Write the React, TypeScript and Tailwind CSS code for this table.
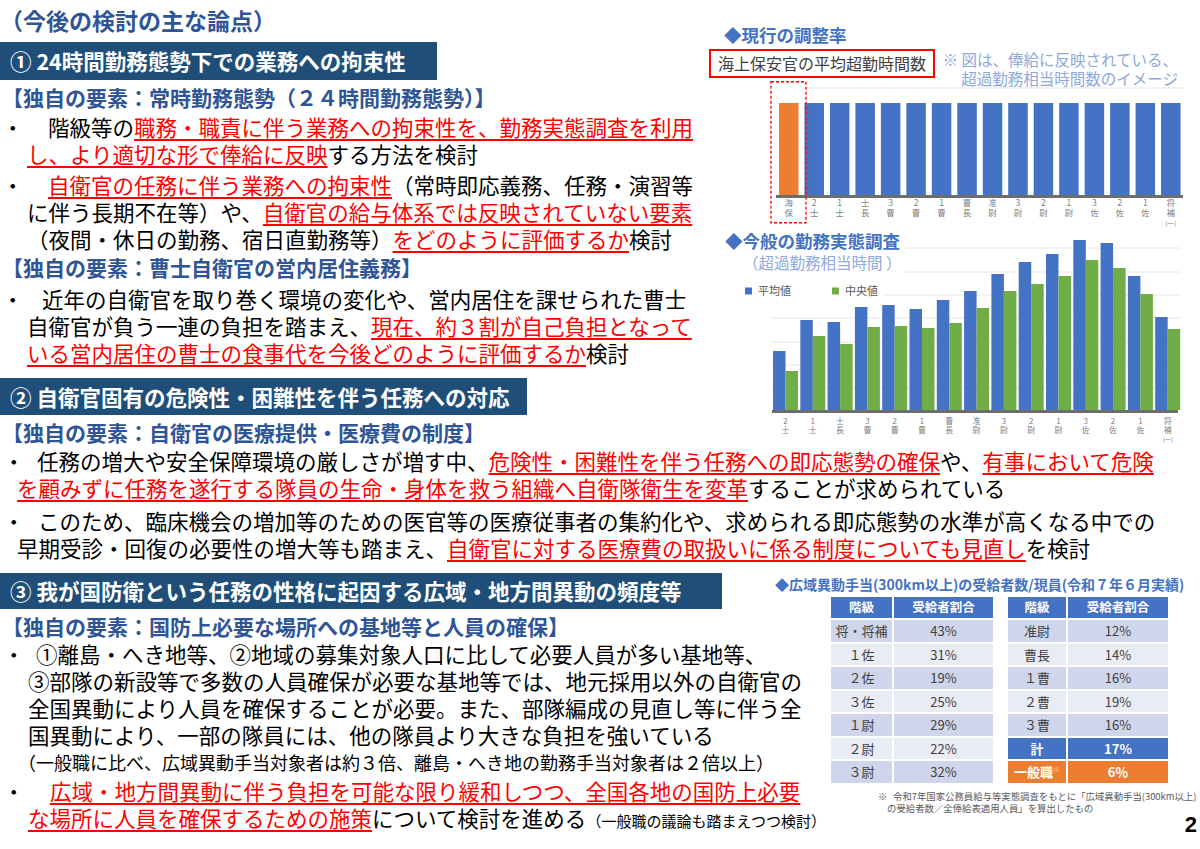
import type { ReactNode } from "react";

// 赤字＋下線
const R = ({ children }: { children: ReactNode }) => (
  <span className="text-[#ff0000] underline decoration-[#ff0000] decoration-[1.5px] underline-offset-[3px]">{children}</span>
);

const Line = ({ className = "", children }: { className?: string; children: ReactNode }) => (
  <div className={`h-[27px] leading-[27px] whitespace-nowrap text-[21.5px] text-black ${className}`}>{children}</div>
);

const Dot = ({ className }: { className: string }) => <span className={`inline-block ${className}`}>・</span>;

const Bar = ({ className, children }: { className: string; children: ReactNode }) => (
  <div className={`bg-[#1f4e79] text-white font-bold text-[21.5px] pl-[10px] whitespace-nowrap ${className}`}>{children}</div>
);

const Sub = ({ className = "", children }: { className?: string; children: ReactNode }) => (
  <div className={`h-[27px] leading-[27px] text-[21px] font-bold text-[#2f5597] pl-[2px] whitespace-nowrap ${className}`}>{children}</div>
);

const ranks = [
  ["海", "保"], ["2", "士"], ["1", "士"], ["士", "長"], ["3", "曹"], ["2", "曹"], ["1", "曹"], ["曹", "長"],
  ["准", "尉"], ["3", "尉"], ["2", "尉"], ["1", "尉"], ["3", "佐"], ["2", "佐"], ["1", "佐"], ["将", "補", "(一)"],
];

const FONT = "Noto Sans CJK JP, sans-serif";

function Chart1() {
  return (
    <svg width={495} height={147} className="block overflow-visible" fontFamily={FONT}>
      <line x1={101} x2={478} y1={7} y2={7} stroke="#e3e3e3" strokeWidth={1} />
      {ranks.map((r, i) => {
        const x = 74 + 25.47 * i;
        return (
          <g key={i}>
            <rect x={x} y={22} width={19.5} height={92} fill={i === 0 ? "#ed7d31" : "#4472c4"} />
            {r.map((c, j) => (
              <text key={j} x={x + 9.75} y={125 + j * 10} fontSize={j === 2 ? 6.5 : 8.5} textAnchor="middle" fill="#7f7f7f">
                {c}
              </text>
            ))}
          </g>
        );
      })}
      <rect x={71} y={114} width={407} height={3} fill="#6d6d6d" />
      <rect x={66} y={0.75} width={35} height={141} fill="none" stroke="#ff0000" strokeWidth={1.3} strokeDasharray="3 2" />
    </svg>
  );
}

const avg = [59, 90, 88, 103, 105, 101, 110, 119, 136, 148, 156, 170, 167, 134, 93];
const med = [39, 74, 66, 83, 84, 82, 87, 102, 119, 126, 134, 150, 142, 116, 81];

function Chart2() {
  const base = 138;
  return (
    <svg width={495} height={172} className="block overflow-visible" fontFamily={FONT}>
      {[-24, 0, 23, 46, 70, 93, 116].map((y) => (
        <line key={y} x1={y <= 0 ? 200 : 67} x2={475} y1={y} y2={y} stroke="#e6e6e6" strokeWidth={1} />
      ))}
      <rect x={38} y={12} width={140} height={16} fill="#ffffff" />
      <rect x={40} y={15.5} width={7} height={7} fill="#4472c4" />
      <text x={53} y={23} fontSize={11} fill="#595959">平均値</text>
      <rect x={127} y={15.5} width={7} height={7} fill="#70ad47" />
      <text x={140} y={23} fontSize={11} fill="#595959">中央値</text>
      {avg.map((a, i) => {
        const x = 68 + 27.3 * i;
        const r = ranks[i + 1];
        return (
          <g key={i}>
            <rect x={x} y={base - a} width={12.5} height={a} fill="#4472c4" />
            <rect x={x + 12.5} y={base - med[i]} width={12.5} height={med[i]} fill="#70ad47" />
            {r.map((c, j) => (
              <text key={j} x={x + 12.5} y={152 + j * 9} fontSize={j === 2 ? 6 : 8} textAnchor="middle" fill="#808080">
                {c}
              </text>
            ))}
          </g>
        );
      })}
      <rect x={67} y={base} width={406} height={3} fill="#6d6d6d" />
    </svg>
  );
}

const leftRows = [
  ["将・将補", "43%"], ["１佐", "31%"], ["２佐", "19%"], ["３佐", "25%"], ["１尉", "29%"], ["２尉", "22%"], ["３尉", "32%"],
];
const rightRows = [["准尉", "12%"], ["曹長", "14%"], ["１曹", "16%"], ["２曹", "19%"], ["３曹", "16%"]];

const th = "h-[21px] bg-[#4472c4] text-white font-bold text-[12.5px] flex items-center justify-center";
const td = "h-[21.5px] text-[13px] text-[#404040] flex items-center justify-center";

function RateTables() {
  return (
    <div className="mt-[4px] pl-[1px] flex gap-[15px]">
      <div className="grid grid-cols-[61px_99px] gap-[2px]">
        <div className={th}>階級</div>
        <div className={th}>受給者割合</div>
        {leftRows.map(([k, v], i) => (
          <div key={k} className="contents">
            <div className={`${td} ${i % 2 === 0 ? "bg-[#cfd5ea]" : "bg-[#e9ebf5]"}`}>{k}</div>
            <div className={`${td} ${i % 2 === 0 ? "bg-[#cfd5ea]" : "bg-[#e9ebf5]"}`}>{v}</div>
          </div>
        ))}
      </div>
      <div className="grid grid-cols-[58px_100px] gap-[2px]">
        <div className={th}>階級</div>
        <div className={th}>受給者割合</div>
        {rightRows.map(([k, v], i) => (
          <div key={k} className="contents">
            <div className={`${td} ${i % 2 === 0 ? "bg-[#cfd5ea]" : "bg-[#e9ebf5]"}`}>{k}</div>
            <div className={`${td} ${i % 2 === 0 ? "bg-[#cfd5ea]" : "bg-[#e9ebf5]"}`}>{v}</div>
          </div>
        ))}
        <div className="h-[21.5px] bg-[#4472c4] text-white font-bold text-[13px] flex items-center justify-center">計</div>
        <div className="h-[21.5px] bg-[#4472c4] text-white font-bold text-[13px] flex items-center justify-center">17%</div>
        <div className="h-[21.5px] bg-[#ed7d31] text-white font-bold text-[13px] flex items-center justify-center">
          一般職<span className="text-[7px] text-[#f8cbad] self-start mt-[3px]">※</span>
        </div>
        <div className="h-[21.5px] bg-[#ed7d31] text-white font-bold text-[13px] flex items-center justify-center">6％</div>
      </div>
    </div>
  );
}

export default function App() {
  return (
    <div className="relative w-[1200px] h-[849px] overflow-hidden bg-white font-['Noto_Sans_CJK_JP',sans-serif]">
      {/* 上段：① と右側グラフ */}
      <div className="flex">
        <div className="w-[705px] shrink-0">
          <div className="pt-[6px] h-[34px] leading-[28px] text-[23px] font-bold text-[#2f5597] whitespace-nowrap">
            （今後の検討の主な論点）
          </div>
          <Bar className="mt-[8px] w-[437px] h-[38px] leading-[38px]">① 24時間勤務態勢下での業務への拘束性</Bar>
          <Sub className="mt-[4px]">【独自の要素：常時勤務態勢（２４時間勤務態勢）】</Sub>

          <Line className="mt-[2px] pl-[2px]">
            <Dot className="w-[46px]" />階級等の<R>職務・職責に伴う業務への拘束性を、勤務実態調査を利用</R>
          </Line>
          <Line className="pl-[27px]">
            <R>し、より適切な形で俸給に反映</R>する方法を検討
          </Line>
          <Line className="mt-[4px] pl-[2px]">
            <Dot className="w-[46px]" /><R>自衛官の任務に伴う業務への拘束性</R>（常時即応義務、任務・演習等
          </Line>
          <Line className="pl-[27px]">
            に伴う長期不在等）や、<R>自衛官の給与体系では反映されていない要素</R>
          </Line>
          <Line className="pl-[27px]">
            （夜間・休日の勤務、宿日直勤務等）<R>をどのように評価するか</R>検討
          </Line>

          <Sub className="mt-[2px]">【独自の要素：曹士自衛官の営内居住義務】</Sub>
          <Line className="mt-[4px] pl-[2px]">
            <Dot className="w-[40px]" />近年の自衛官を取り巻く環境の変化や、営内居住を課せられた曹士
          </Line>
          <Line className="pl-[27px]">
            自衛官が負う一連の負担を踏まえ、<R>現在、約３割が自己負担となって</R>
          </Line>
          <Line className="pl-[27px]">
            <R>いる営内居住の曹士の食事代を今後どのように評価するか</R>検討
          </Line>

          <Bar className="mt-[12px] w-[527px] h-[37px] leading-[37px]">② 自衛官固有の危険性・困難性を伴う任務への対応</Bar>
          <Sub className="mt-[4px]">【独自の要素：自衛官の医療提供・医療費の制度】</Sub>
        </div>

        <div className="w-[495px] shrink-0">
          <div className="mt-[24px] h-[22px] leading-[22px] pl-[19px] text-[17.5px] font-bold text-[#4472c4] whitespace-nowrap">
            ◆現行の調整率
          </div>
          <div className="h-[35px] flex items-start">
            <div className="ml-[4px] mt-[3px] w-[226px] h-[29px] border-2 border-[#ff0000] pl-[7px] text-[16px] leading-[25px] text-[#404040] whitespace-nowrap">
              海上保安官の平均超勤時間数
            </div>
            <div className="ml-auto mt-[4px] pr-[22px] text-right text-[15.5px] leading-[19px] text-[#8ea9db] whitespace-nowrap">
              <div>※ 図は、俸給に反映されている、</div>
              <div>超過勤務相当時間数のイメージ</div>
            </div>
          </div>
          <Chart1 />
          <div className="mt-[2px] h-[22px] leading-[22px] pl-[20px] text-[17.5px] font-bold text-[#4472c4] whitespace-nowrap">
            ◆今般の勤務実態調査
          </div>
          <div className="h-[20px] leading-[20px] pl-[38px] text-[15.5px] text-[#8ea9db] whitespace-nowrap">
            （超過勤務相当時間 ）
          </div>
          <Chart2 />
        </div>
      </div>

      {/* ② の本文（全幅） */}
      <Line className="mt-[1px] pl-[3px]">
        <Dot className="w-[34px]" />任務の増大や安全保障環境の厳しさが増す中、<R>危険性・困難性を伴う任務への即応態勢の確保</R>や、<R>有事において危険</R>
      </Line>
      <Line className="pl-[17px]">
        <R>を顧みずに任務を遂行する隊員の生命・身体を救う組織へ自衛隊衛生を変革</R>することが求められている
      </Line>
      <Line className="mt-[6px] pl-[3px]">
        <Dot className="w-[35px]" />このため、臨床機会の増加等のための医官等の医療従事者の集約化や、求められる即応態勢の水準が高くなる中での
      </Line>
      <Line className="pl-[17px]">
        早期受診・回復の必要性の増大等も踏まえ、<R>自衛官に対する医療費の取扱いに係る制度についても見直し</R>を検討
      </Line>

      {/* 下段：③ と表 */}
      <div className="flex">
        <div className="w-[830px] shrink-0">
          <Bar className="mt-[12px] w-[722px] h-[36px] leading-[36px]">③ 我が国防衛という任務の性格に起因する広域・地方間異動の頻度等</Bar>
          <Sub className="mt-[4px]">【独自の要素：国防上必要な場所への基地等と人員の確保】</Sub>
          <Line className="pl-[3px]">
            <Dot className="w-[33px]" />①離島・へき地等、②地域の募集対象人口に比して必要人員が多い基地等、
          </Line>
          <Line className="pl-[28px]">③部隊の新設等で多数の人員確保が必要な基地等では、地元採用以外の自衛官の</Line>
          <Line className="pl-[28px]">全国異動により人員を確保することが必要。また、部隊編成の見直し等に伴う全</Line>
          <Line className="pl-[28px]">国異動により、一部の隊員には、他の隊員より大きな負担を強いている</Line>
          <div className="h-[28px] leading-[28px] pl-[18px] text-[18px] text-black whitespace-nowrap">
            （一般職に比べ、広域異動手当対象者は約３倍、離島・へき地の勤務手当対象者は２倍以上）
          </div>
          <Line className="mt-[1px] pl-[3px]">
            <Dot className="w-[47px]" /><R>広域・地方間異動に伴う負担を可能な限り緩和しつつ、全国各地の国防上必要</R>
          </Line>
          <Line className="pl-[28px]">
            <R>な場所に人員を確保するための施策</R>について検討を進める
            <span className="text-[15px]">（一般職の議論も踏まえつつ検討）</span>
          </Line>
        </div>

        <div className="flex-1">
          <div className="mt-[14px] -ml-[55px] h-[18px] leading-[18px] text-[14px] font-bold text-[#4472c4] whitespace-nowrap">
            ◆広域異動手当(300km以上)の受給者数/現員(令和７年６月実績)
          </div>
          <RateTables />
          <div className="mt-[7px] text-[9.4px] leading-[12px] text-[#595959] whitespace-nowrap">
            <div className="pl-[48px]">
              <span className="inline-block w-[15px]">※</span>令和7年国家公務員給与等実態調査をもとに「広域異動手当(300km以上)
            </div>
            <div className="pl-[57px]">の受給者数／全俸給表適用人員」を算出したもの</div>
          </div>
          <div className="pr-[3px] text-right font-['Liberation_Sans',Arial,sans-serif] font-bold text-[22px] leading-[22px] text-black">
            2
          </div>
        </div>
      </div>
    </div>
  );
}
